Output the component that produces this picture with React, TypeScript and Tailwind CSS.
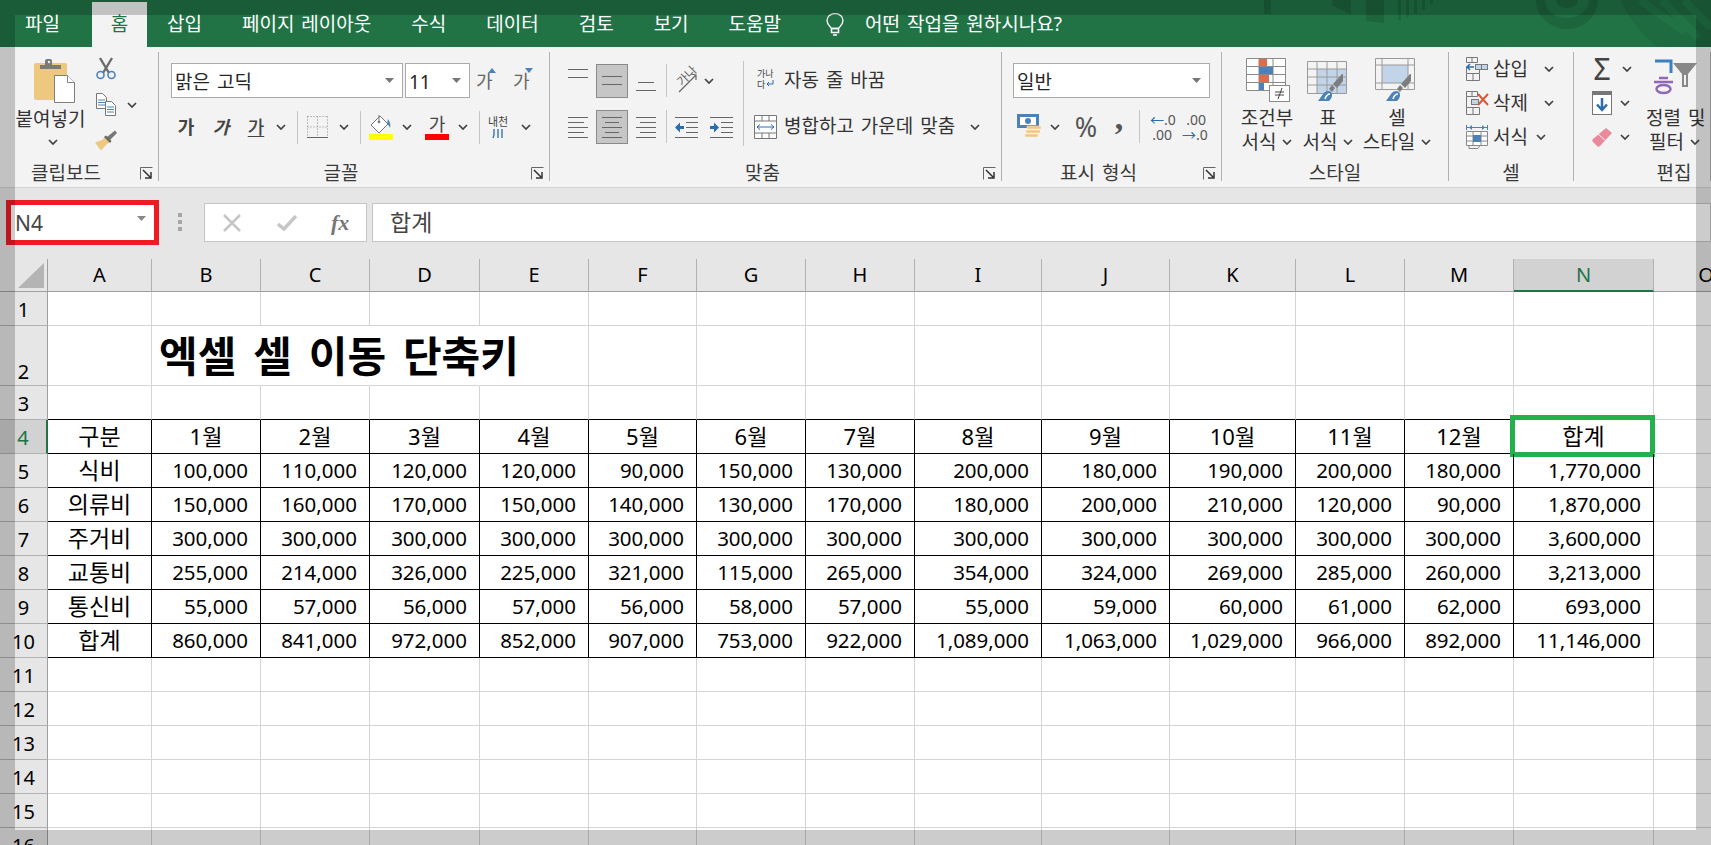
import type { ReactNode } from "react";

const tabs = ["파일", "홈", "삽입", "페이지 레이아웃", "수식", "데이터", "검토", "보기", "도움말"];

const columns = [
  { name: "A", width: "w-[104px]" },
  { name: "B", width: "w-[109px]" },
  { name: "C", width: "w-[109px]" },
  { name: "D", width: "w-[110px]" },
  { name: "E", width: "w-[109px]" },
  { name: "F", width: "w-[108px]" },
  { name: "G", width: "w-[109px]" },
  { name: "H", width: "w-[109px]" },
  { name: "I", width: "w-[127px]" },
  { name: "J", width: "w-[128px]" },
  { name: "K", width: "w-[126px]" },
  { name: "L", width: "w-[109px]" },
  { name: "M", width: "w-[109px]" },
  { name: "N", width: "w-[140px]" },
  { name: "O", width: "w-[104px]" },
];

const tableRows: Record<number, string[]> = {
  4: ["구분", "1월", "2월", "3월", "4월", "5월", "6월", "7월", "8월", "9월", "10월", "11월", "12월", "합계"],
  5: ["식비", "100,000", "110,000", "120,000", "120,000", "90,000", "150,000", "130,000", "200,000", "180,000", "190,000", "200,000", "180,000", "1,770,000"],
  6: ["의류비", "150,000", "160,000", "170,000", "150,000", "140,000", "130,000", "170,000", "180,000", "200,000", "210,000", "120,000", "90,000", "1,870,000"],
  7: ["주거비", "300,000", "300,000", "300,000", "300,000", "300,000", "300,000", "300,000", "300,000", "300,000", "300,000", "300,000", "300,000", "3,600,000"],
  8: ["교통비", "255,000", "214,000", "326,000", "225,000", "321,000", "115,000", "265,000", "354,000", "324,000", "269,000", "285,000", "260,000", "3,213,000"],
  9: ["통신비", "55,000", "57,000", "56,000", "57,000", "56,000", "58,000", "57,000", "55,000", "59,000", "60,000", "61,000", "62,000", "693,000"],
  10: ["합계", "860,000", "841,000", "972,000", "852,000", "907,000", "753,000", "922,000", "1,089,000", "1,063,000", "1,029,000", "966,000", "892,000", "11,146,000"],
};

const rowNumbers = [1, 2, 3, 4, 5, 6, 7, 8, 9, 10, 11, 12, 13, 14, 15, 16];

function Chev({ className = "" }: { className?: string }) {
  return (
    <svg width="10" height="6" viewBox="0 0 10 6" className={`shrink-0 ${className}`}>
      <path d="M1 1l4 4 4-4" fill="none" stroke="#404040" strokeWidth="1.7" />
    </svg>
  );
}

function Launcher() {
  return (
    <svg width="13" height="13" viewBox="0 0 13 13" className="absolute right-[5px] bottom-[1px]">
      <path d="M.5 12.500v-12h12" fill="none" stroke="#666" />
      <path d="M3 3l7 7M11 5v6H5" fill="none" stroke="#333" strokeWidth="1.500" />
    </svg>
  );
}

function Group({ width, label, launcher, labelClass = "", children }: { width: string; label: string; launcher?: boolean; labelClass?: string; children: ReactNode }) {
  return (
    <div className={`${width} h-[129px] mt-[5px] shrink-0 flex flex-col border-r border-[#b1b1b1]`}>
      <div className="h-[103px] shrink-0">{children}</div>
      <div className={`relative h-[26px] text-center text-[19px] leading-[26px] pt-[5px] text-[#3a3a3a] whitespace-nowrap ${launcher ? "pr-[26px]" : ""} ${labelClass}`}>
        {label}
        {launcher && <Launcher />}
      </div>
    </div>
  );
}

function Combo({ width, value, className = "" }: { width: string; value: string; className?: string }) {
  return (
    <div className={`${width} h-[35px] shrink-0 flex items-center justify-between bg-white border border-[#ababab] pl-[3px] pr-[8px] text-[19px] text-[#262626] ${className}`}>
      <span className="mt-[3px]">{value}</span>
      <svg width="9" height="5" viewBox="0 0 9 5"><path d="M0 0h9L4.500 5z" fill="#777" /></svg>
    </div>
  );
}

function Sep({ className = "" }: { className?: string }) {
  return <div className={`w-px h-[33px] bg-[#c6c6c6] shrink-0 ${className}`} />;
}

// 맞춤 아이콘: [x1, x2, y] 선 목록
function Lines({ lines, width = 20, height = 24, color = "#666" }: { lines: number[][]; width?: number; height?: number; color?: string }) {
  return (
    <svg width={width} height={height} viewBox={`0 0 ${width} ${height}`} className="shrink-0">
      {lines.map(([x1, x2, y]) => (
        <path key={`${x1}-${y}`} d={`M${x1} ${y + 0.5}H${x2}`} stroke={color} />
      ))}
    </svg>
  );
}

function Selected({ children }: { children: ReactNode }) {
  return (
    <div className="w-[32px] h-[34px] shrink-0 flex items-center justify-center bg-[#c6c6c6] border border-[#8a8a8a]">
      {children}
    </div>
  );
}

function Orientation() {
  return (
    <div className="relative w-[23px] h-[26px] shrink-0">
      <span className="absolute left-[1px] top-[1px] -rotate-45 text-[12px] leading-[14px] text-[#666] whitespace-nowrap">가나</span>
      <svg width="23" height="26" viewBox="0 0 23 26" className="absolute left-0 top-0">
        <path d="M4 24L21 7M16 6l5 1 0 5" fill="none" stroke="#666" strokeWidth="1.200" />
      </svg>
    </div>
  );
}

function IndentIcon({ flip }: { flip?: boolean }) {
  return (
    <svg width="23" height="24" viewBox="0 0 23 24" className="shrink-0">
      <path d="M0 2.500h23M11 7.500h12M11 12.500h12M11 17.500h12M0 22.500h23" stroke="#666" />
      {flip ? (
        <path d="M0 11h4V7.500l5 5-5 5V14H0z" fill="#2b6cb0" />
      ) : (
        <path d="M9 11H5V7.500l-5 5 5 5V14h4z" fill="#2b6cb0" />
      )}
    </svg>
  );
}

function WrapIcon() {
  return (
    <div className="relative w-[20px] h-[26px] shrink-0 text-[9px] leading-[11px] text-[#444]">
      <div>가나</div>
      <div className="flex items-center">
        다
        <svg width="8" height="8" viewBox="0 0 8 8" className="ml-[1px]"><path d="M7 0v4H1M3 2L1 4l2 2" fill="none" stroke="#2b6cb0" /></svg>
      </div>
    </div>
  );
}

function MergeIcon() {
  return (
    <svg width="23" height="24" viewBox="0 0 23 24" className="shrink-0">
      <path d="M.5.500h22v23H.5zM.5 6h22M.5 18h22M8 .5V6M15 .5V6M8 18v5.500M15 18v5.500" fill="#fff" stroke="#777" />
      <path d="M3 12h17M6 9.500L3 12l3 2.500M17 9.500l3 2.500-3 2.500" fill="none" stroke="#2b6cb0" />
    </svg>
  );
}

function Paste() {
  return (
    <svg width="41" height="45" viewBox="0 0 41 45">
      <rect y="5" width="33" height="37" rx="2" fill="#edc87e" />
      <path d="M6 11V7h5V3a2 2 0 012-2h3a2 2 0 012 2v4h9v4z" fill="#7a7a7a" />
      <circle cx="15" cy="4" r="1.200" fill="#eee" />
      <path d="M20.500 17.500h13l7 7v20h-20z" fill="#fff" stroke="#7f7f7f" />
      <path d="M33.500 17.500v7h7" fill="#fff" stroke="#7f7f7f" />
    </svg>
  );
}

function Scissors() {
  return (
    <svg width="20" height="23" viewBox="0 0 20 23">
      <path d="M4 1l9 15M16 1L7 16" stroke="#6b6b6b" strokeWidth="2.400" fill="none" />
      <circle cx="4.500" cy="18" r="3.500" fill="none" stroke="#4d82b8" strokeWidth="1.600" />
      <circle cx="15.500" cy="18" r="3.500" fill="none" stroke="#4d82b8" strokeWidth="1.600" />
    </svg>
  );
}

function CopyIcon() {
  return (
    <svg width="20" height="23" viewBox="0 0 20 23">
      <path d="M.5.500h6l4 4v11h-10z" fill="#fff" stroke="#777" />
      <path d="M2 7h7M2 9.500h7M2 12h7" stroke="#4d82b8" />
      <path d="M9.500 8.500h6l4 4v10h-10z" fill="#fff" stroke="#777" />
      <path d="M11 14h7M11 16.500h7M11 19h7" stroke="#4d82b8" />
    </svg>
  );
}

function Painter() {
  return (
    <svg width="23" height="21" viewBox="0 0 23 21">
      <path d="M12 7l3 3 7-7-2-2.500z" fill="#777" />
      <path d="M10 7l5 5-3 2-6 6.500L0 12.500l7-2.500z" fill="#edc87e" />
      <path d="M9 7l6 6 1.500-2L11 5.500z" fill="#666" />
    </svg>
  );
}

function FillIcon() {
  return (
    <svg width="24" height="26" viewBox="0 0 24 26">
      <path d="M11 2L2 11l8 8 9-9z" fill="#fff" stroke="#777" />
      <path d="M10 1v7" stroke="#777" />
      <circle cx="10" cy="8" r="1.300" fill="#777" />
      <path d="M19 5c2 3 3 6 2 9-1-3-2-3-3-4z" fill="#4d82b8" />
      <rect y="20" width="24" height="6" fill="#ffff00" />
    </svg>
  );
}

function Borders() {
  return (
    <svg width="21" height="22" viewBox="0 0 21 22">
      <path d="M.5.500h20M.5 11h20M.5.500v21M10.500.500v21M20.500.500v21" stroke="#888" strokeDasharray="1 2" fill="none" />
      <path d="M0 21.500h21" stroke="#666" />
    </svg>
  );
}

function Accounting() {
  return (
    <svg width="24" height="26" viewBox="0 0 24 26" className="shrink-0">
      <rect width="22" height="14" fill="#4d82b8" />
      <rect x="3" y="3" width="16" height="8" fill="#fff" />
      <circle cx="11" cy="7" r="3" fill="#4d82b8" />
      <path d="M10 12h14v3H10zM9 16h14v3H9zM8 20h13v3H8z" fill="#edc87e" stroke="#f3f3f3" strokeWidth=".5" />
    </svg>
  );
}

function Brush({ x, y }: { x: number; y: number }) {
  return (
    <g transform={`translate(${x} ${y})`}>
      <path d="M24 0h1v7l-6 7-4-4z" fill="#7d7d7d" />
      <path d="M11 15l3-4 3 3-3 4z" fill="#7d7d7d" />
      <path d="M0 27l5-7c2-3 6-4 8-2 2 2 1 7-2 9z" fill="#4d82b8" />
      <path d="M7 25c1-3 3-5 5-5" stroke="#fff" strokeWidth="1.500" fill="none" />
    </g>
  );
}

function CondIcon() {
  return (
    <svg width="44" height="45" viewBox="0 0 44 45">
      <path d="M.5.500h39v32H.5zM.5 8.500h39M.5 16.500h39M.5 24.500h39M13 .5v32M27 .5v32" fill="#fff" stroke="#8a8a8a" />
      <rect x="13" y="1" width="8" height="7" fill="#dd6b4d" />
      <rect x="13" y="9" width="14" height="7" fill="#4d82b8" />
      <rect x="13" y="17" width="10" height="7" fill="#dd6b4d" />
      <rect x="13" y="25" width="5" height="7" fill="#4d82b8" />
      <rect x="23.500" y="27.500" width="20" height="16" fill="#fff" stroke="#8a8a8a" />
      <path d="M29 34h9M29 37h9M36 30l-4 11" stroke="#444" fill="none" />
    </svg>
  );
}

function TableStyleIcon() {
  return (
    <svg width="44" height="45" viewBox="0 0 44 45">
      <rect x="10" y="11" width="30" height="24" fill="#c2d5e8" />
      <path d="M.5 3.500h39v32H.5zM.5 11h39M.5 19h39M.5 27h39M10 3.500v32M20 3.500v32M30 3.500v32" fill="none" stroke="#9a9a9a" />
      <Brush x={11} y={16} />
    </svg>
  );
}

function CellStyleIcon() {
  return (
    <svg width="44" height="45" viewBox="0 0 44 45">
      <rect x="7" y="7" width="26" height="18" fill="#c2d5e8" />
      <path d="M.5.500h39v31H.5zM.5 7h39M.5 25h39M7 .5v31M33 .5v31" fill="none" stroke="#9a9a9a" />
      <Brush x={11} y={16} />
    </svg>
  );
}

function InsertIcon() {
  return (
    <svg width="22" height="24" viewBox="0 0 22 24" className="shrink-0">
      <path d="M.5.500h11v5H.5zM6 .5v5M.5 16.500h13v7H.5zM7 16.500v7M.5 9.500v7M13.500 12.500v4" fill="none" stroke="#777" />
      <rect x="9.500" y="7.500" width="12" height="5" fill="#c2d5e8" stroke="#777" />
      <path d="M15.500 7.500v5" stroke="#777" />
      <path d="M1 10h7M4 7l-3 3 3 3" fill="none" stroke="#2b6cb0" strokeWidth="1.500" />
    </svg>
  );
}

function DeleteIcon() {
  return (
    <svg width="24" height="24" viewBox="0 0 24 24" className="shrink-0">
      <path d="M.5.500h11v5H.5zM6 .5v5M.5 16.500h13v7H.5zM7 16.500v7M.5 5.500v11" fill="none" stroke="#777" />
      <rect x="5.500" y="8.500" width="7" height="5" fill="#c2d5e8" stroke="#777" />
      <path d="M12 3l10 11M22 3L12 14" stroke="#d9583b" strokeWidth="2" />
    </svg>
  );
}

function FormatIcon() {
  return (
    <svg width="22" height="26" viewBox="0 0 22 26" className="shrink-0">
      <path d="M1 3.500h20M.5 1v5M21.500 1v5" stroke="#4d82b8" fill="none" />
      <path d="M3 3.500L6 1v5zM19 3.500L16 1v5z" fill="#4d82b8" />
      <path d="M.5 7.500h21v14H.5zM.5 12h21M.5 17h21M7 7.500v14M15 7.500v14" fill="#fff" stroke="#888" />
      <rect x="7" y="11" width="8" height="7" fill="#4d82b8" />
      <path d="M3 21.500v3h9l2-3" fill="none" stroke="#888" />
    </svg>
  );
}

function AutoFill() {
  return (
    <svg width="20" height="24" viewBox="0 0 20 24" className="shrink-0">
      <rect x=".5" y=".5" width="19" height="23" fill="#fff" stroke="#777" />
      <rect width="20" height="4" fill="#777" />
      <path d="M10 7v12M5 13.500l5 5.500 5-5.500" fill="none" stroke="#2b6cb0" strokeWidth="2.500" />
    </svg>
  );
}

function Eraser() {
  return (
    <svg width="21" height="21" viewBox="0 0 21 21" className="shrink-0">
      <path d="M14 1l6 5-12 13c-1 1-2 1-3 0l-4-4c-1-1-1-2 0-3z" fill="#e88a9b" />
      <path d="M6 7l8 7" stroke="#f3f3f3" />
    </svg>
  );
}

function SortIcon() {
  return (
    <div className="flex items-start">
      <svg width="19" height="36" viewBox="0 0 19 36" className="shrink-0 mt-[1px]">
        <path d="M1 2h16v12" fill="none" stroke="#3f7fbf" strokeWidth="3" />
        <path d="M0 23h19M5 19h9" stroke="#9266b8" strokeWidth="2.500" />
        <ellipse cx="9.500" cy="30" rx="7" ry="4" fill="none" stroke="#9266b8" strokeWidth="2.500" />
      </svg>
      <svg width="24" height="24" viewBox="0 0 24 24" className="shrink-0 mt-[5px]">
        <path d="M0 0h24l-9 11v13H9V11z" fill="#888" />
        <path d="M11 12h2v10h-2z" fill="#f3f3f3" />
      </svg>
    </div>
  );
}

function Cell({ row, index, value }: { row: number; index: number; value: string }) {
  const centered = row === 4 || index === 0;
  const isMonth = row === 4 && index > 0 && index < 13;
  const size = isMonth ? "text-[22px]" : centered ? "text-[23px]" : "text-[20.5px]";
  return (
    <div className={`${columns[index].width} relative shrink-0 flex items-center border-r border-b border-black leading-none pb-[1px] ${size} ${centered ? "justify-center" : "justify-end pr-[12px]"}`}>
      {value}
      {row === 4 && index === 13 && (
        <div className="absolute -left-[4px] -top-[5px] w-[145px] h-[42px] border-[5px] border-[#22b14c]" />
      )}
    </div>
  );
}

function SheetRow({ row }: { row: number }) {
  const selected = row === 4;
  const data = tableRows[row];
  const height = row === 2 ? "h-[60px]" : "h-[34px]";
  return (
    <div className={`flex shrink-0 ${height}`}>
      <div className={`w-[48px] shrink-0 flex justify-center border-b border-[#b1b1b1] text-[20px] leading-none ${row === 2 ? "items-end pb-[3px]" : "items-center pt-[2px]"} ${selected ? "bg-[#d2d2d2] text-[#217346] border-r-2 border-r-[#217346]" : "bg-[#e6e6e6] border-r border-r-[#9f9f9f]"}`}>
        {row}
      </div>
      {columns.map((col, i) =>
        data && i < 14 ? (
          <Cell key={col.name} row={row} index={i} value={data[i]} />
        ) : (
          <div
            key={col.name}
            className={`${col.width} shrink-0 relative border-r border-b ${row === 2 && i >= 1 && i <= 3 ? "border-r-transparent" : "border-r-[#d4d4d4]"} ${row === 3 && i < 14 ? "border-b-black" : "border-b-[#d4d4d4]"}`}
          >
            {row === 2 && i === 1 && (
              <div className="absolute z-10 left-[7px] bottom-[3px] text-[42px] leading-[52px] font-bold text-black whitespace-nowrap [word-spacing:6px]">
                엑셀 셀 이동 단축키
              </div>
            )}
          </div>
        )
      )}
    </div>
  );
}

export default function App() {
  return (
    <div className="relative w-[1711px] h-[845px] overflow-hidden flex flex-col bg-white text-black font-['Noto_Sans','Noto_Sans_CJK_KR',sans-serif] [word-spacing:2px]">
      {/* 리본 탭 */}
      <div className="relative h-[47px] shrink-0 bg-[#217346] flex pl-[5px] text-[19px] text-white overflow-hidden">
        <svg width="1711" height="47" viewBox="0 0 1711 47" className="absolute left-0 top-0">
          <g fill="#000" fillOpacity="0.12">
            <rect x="1264" y="0" width="7" height="14" />
            <path d="M1332 0h19v15l-19-10z" />
            <path d="M1366 0h18v23l-18-2z" />
            <path d="M1398 0h3v20h-3zM1406 0h3v17h-3zM1414 0h3v14h-3zM1422 0h3v10h-3zM1430 0h3v4h-3z" />
            <path d="M1536 0a31 29 0 0062 0h-9a22 18 0 01-44 0z" />
            <path d="M1556 0a11 8 0 0022 0z" />
          </g>
          <circle cx="1728" cy="-48" r="118" fill="#000" fillOpacity="0.07" />
          <path d="M1640 0l45 32M1662 0l36 38M1684 0l27 28" stroke="#217346" strokeWidth="8" fill="none" />
        </svg>
        {tabs.map((tab) =>
          tab === "홈" ? (
            <div key={tab} className="relative mt-[2px] ml-[12px] w-[55px] h-[45px] shrink-0 flex items-center justify-center bg-[#f3f3f3] text-[#217346]">
              {tab}
            </div>
          ) : (
            <div key={tab} className="relative mt-[2px] h-[45px] shrink-0 flex items-center px-[20px] whitespace-nowrap">
              {tab}
            </div>
          )
        )}
        <div className="relative mt-[2px] h-[45px] flex items-center ml-[24px] gap-[20px] whitespace-nowrap">
          <svg width="20" height="24" viewBox="0 0 20 24">
            <path d="M6.500 15.500C5 13 2 11.500 2 7.500a8 7 0 0116 0c0 4-3 5.500-4.500 8z" fill="none" stroke="#fff" strokeWidth="1.300" />
            <path d="M6.500 15.500h7v4h-7zM8 22h4" fill="none" stroke="#fff" strokeWidth="1.500" />
          </svg>
          <span>어떤 작업을 원하시나요?</span>
        </div>
      </div>

      {/* 리본 */}
      <div className="h-[141px] shrink-0 flex bg-[#f3f3f3] border-b border-[#d4d4d4] text-[#333] overflow-hidden">
        <Group width="w-[159px]" label="클립보드" launcher>
          <div className="flex h-full">
            <div className="w-[90px] pt-[6px] flex flex-col items-center">
              <div className="ml-[19px]">
                <Paste />
              </div>
              <div className="mt-[3px] ml-[11px] text-[19px] leading-[26px] whitespace-nowrap">붙여넣기</div>
              <Chev className="mt-[7px] ml-[16px]" />
            </div>
            <div className="flex flex-col pt-[5px] pl-[6px]">
              <Scissors />
              <div className="mt-[13px] flex items-center gap-[11px]">
                <CopyIcon />
                <Chev />
              </div>
              <div className="mt-[14px] -ml-[1px]">
                <Painter />
              </div>
            </div>
          </div>
        </Group>

        <Group width="w-[391px]" label="글꼴" launcher>
          <div className="flex items-center mt-[11px] ml-[12px]">
            <Combo width="w-[232px]" value="맑은 고딕" />
            <Combo width="w-[65px]" value="11" className="ml-[2px]" />
            <div className="relative ml-[6px] w-[20px] text-[18px] leading-[24px] text-[#666]">
              가
              <svg width="8" height="5" viewBox="0 0 8 5" className="absolute right-0 -top-[1px]"><path d="M0 5h8L4 0z" fill="#4d82b8" /></svg>
            </div>
            <div className="relative ml-[17px] w-[20px] text-[18px] leading-[24px] text-[#666]">
              가
              <svg width="8" height="5" viewBox="0 0 8 5" className="absolute right-0 -top-[1px]"><path d="M0 0h8L4 5z" fill="#4d82b8" /></svg>
            </div>
          </div>
          <div className="flex items-center h-[32px] mt-[13px] ml-[12px] text-[18px] text-[#444]">
            <span className="ml-[5px] w-[20px] text-center font-bold">가</span>
            <span className="ml-[15px] w-[20px] text-center font-bold italic">가</span>
            <span className="ml-[15px] w-[20px] text-center font-medium underline underline-offset-2">가</span>
            <Chev className="ml-[10px]" />
            <Sep className="ml-[11px]" />
            <div className="ml-[9px] flex"><Borders /></div>
            <Chev className="ml-[11px]" />
            <Sep className="ml-[11px]" />
            <div className="ml-[8px] flex"><FillIcon /></div>
            <Chev className="ml-[9px]" />
            <div className="ml-[13px] w-[24px] flex flex-col items-center">
              <span className="leading-[20px]">가</span>
              <div className="w-[24px] h-[6px] bg-[#ff0000]" />
            </div>
            <Chev className="ml-[9px]" />
            <Sep className="ml-[11px]" />
            <div className="ml-[9px] w-[18px] flex flex-col items-center text-[11px] leading-[12px]">
              <span className="whitespace-nowrap">내천</span>
              <svg width="12" height="11" viewBox="0 0 12 11"><path d="M2 1v6l-1 3M6 1v9M10 1v9" fill="none" stroke="#2b6cb0" strokeWidth="1.300" /></svg>
            </div>
            <Chev className="ml-[14px]" />
          </div>
        </Group>

        <Group width="w-[452px]" label="맞춤" launcher>
          <div className="flex h-full">
            <div className="w-[193px] shrink-0 pl-[18px] pt-[11px]">
              <div className="flex items-center h-[35px]">
                <Lines lines={[[0, 20, 0], [0, 20, 8]]} />
                <div className="ml-[8px]"><Selected><Lines lines={[[0, 20, 7], [0, 20, 15]]} /></Selected></div>
                <div className="ml-[8px]"><Lines lines={[[2, 18, 13], [0, 20, 21]]} /></div>
                <Sep className="ml-[10px]" />
                <div className="ml-[8px]"><Orientation /></div>
                <Chev className="ml-[6px]" />
              </div>
              <div className="flex items-center h-[35px] mt-[11px]">
                <Lines lines={[[0, 20, 2], [0, 16, 7], [0, 20, 12], [0, 16, 17], [0, 20, 22]]} />
                <div className="ml-[8px]"><Selected><Lines lines={[[0, 20, 2], [3, 17, 7], [0, 20, 12], [3, 17, 17], [0, 20, 22]]} /></Selected></div>
                <div className="ml-[8px]"><Lines lines={[[0, 20, 2], [4, 20, 7], [0, 20, 12], [4, 20, 17], [0, 20, 22]]} /></div>
                <Sep className="ml-[10px]" />
                <div className="ml-[8px]"><IndentIcon /></div>
                <div className="ml-[12px]"><IndentIcon flip /></div>
              </div>
            </div>
            <div className="w-px h-[85px] mt-[9px] bg-[#c6c6c6] shrink-0" />
            <div className="pt-[11px] text-[19px] whitespace-nowrap">
              <div className="flex items-center h-[35px] ml-[13px]">
                <WrapIcon />
                <span className="ml-[7px]">자동 줄 바꿈</span>
              </div>
              <div className="flex items-center h-[35px] mt-[11px] ml-[10px]">
                <MergeIcon />
                <span className="ml-[7px]">병합하고 가운데 맞춤</span>
                <Chev className="ml-[15px]" />
              </div>
            </div>
          </div>
        </Group>

        <Group width="w-[220px]" label="표시 형식" launcher>
          <div className="mt-[11px] ml-[11px]">
            <Combo width="w-[197px]" value="일반" />
          </div>
          <div className="flex items-center h-[35px] mt-[11px] ml-[15px] text-[#555]">
            <Accounting />
            <Chev className="ml-[9px]" />
            <span className="ml-[13px] w-[26px] text-center text-[27px] leading-none">%</span>
            <span className="ml-[15px] -mt-[16px] w-[10px] h-[22px] text-center font-['Liberation_Serif',serif] text-[34px] font-bold leading-[20px]">,</span>
            <Sep className="ml-[15px]" />
            <div className="ml-[10px] w-[22px] text-[14px] leading-[15px] text-right whitespace-nowrap">
              <div><span className="text-[#2b6cb0]">←</span>.0</div>
              <div>.00</div>
            </div>
            <div className="ml-[10px] w-[24px] text-[14px] leading-[15px] text-right whitespace-nowrap">
              <div>.00</div>
              <div><span className="text-[#2b6cb0]">→</span>.0</div>
            </div>
          </div>
        </Group>

        <Group width="w-[227px]" label="스타일">
          <div className="flex pt-[6px] pl-[14px] text-[19px] leading-[24px] whitespace-nowrap">
            <div className="w-[62px] flex flex-col items-center">
              <div className="h-[45px] ml-[1px]"><CondIcon /></div>
              <div className="mt-[3px]">조건부</div>
              <div className="flex items-center">서식<Chev className="ml-[6px]" /></div>
            </div>
            <div className="w-[60px] flex flex-col items-center">
              <div className="h-[45px] ml-[1px]"><TableStyleIcon /></div>
              <div className="mt-[3px]">표</div>
              <div className="flex items-center">서식<Chev className="ml-[6px]" /></div>
            </div>
            <div className="w-[78px] flex flex-col items-center">
              <div className="h-[45px]"><CellStyleIcon /></div>
              <div className="mt-[3px]">셀</div>
              <div className="flex items-center">스타일<Chev className="ml-[6px]" /></div>
            </div>
          </div>
        </Group>

        <Group width="w-[125px]" label="셀">
          <div className="pl-[17px] text-[19px] whitespace-nowrap">
            <div className="flex items-center h-[34px]">
              <InsertIcon />
              <span className="ml-[5px]">삽입</span>
              <Chev className="ml-[16px]" />
            </div>
            <div className="flex items-center h-[34px]">
              <DeleteIcon />
              <span className="ml-[3px]">삭제</span>
              <Chev className="ml-[16px]" />
            </div>
            <div className="flex items-center h-[34px]">
              <FormatIcon />
              <span className="ml-[5px]">서식</span>
              <Chev className="ml-[8px]" />
            </div>
          </div>
        </Group>

        <Group width="w-[137px]" label="편집" labelClass="pl-[64px]">
          <div className="flex pl-[18px] text-[19px] leading-[24px] whitespace-nowrap">
            <div className="w-[62px] shrink-0">
              <div className="flex items-center h-[34px]">
                <span className="w-[20px] text-center text-[30px] leading-none text-[#444]">Σ</span>
                <Chev className="ml-[10px]" />
              </div>
              <div className="flex items-center h-[34px]">
                <AutoFill />
                <Chev className="ml-[8px]" />
              </div>
              <div className="flex items-center h-[34px]">
                <Eraser />
                <Chev className="ml-[7px]" />
              </div>
            </div>
            <div className="w-[60px] shrink-0 pt-[6px] flex flex-col items-start">
              <div className="h-[45px]"><SortIcon /></div>
              <div className="mt-[3px] -ml-[8px]">정렬 및</div>
              <div className="flex items-center -ml-[5px]">필터<Chev className="ml-[6px]" /></div>
            </div>
          </div>
        </Group>
      </div>

      {/* 수식 입력줄 */}
      <div className="h-[70px] shrink-0 flex items-start bg-[#e6e6e6]">
        <div className="ml-[6px] mt-[12px] w-[153px] h-[45px] shrink-0 flex items-center justify-between bg-white border-[5px] border-[#ed1c24] pl-[4px] pr-[8px] text-[21px] text-[#444]">
          <span className="mt-[3px]">N4</span>
          <svg width="9" height="5" viewBox="0 0 9 5" className="mb-[8px]"><path d="M0 0h9L4.500 5z" fill="#888" /></svg>
        </div>
        <div className="ml-[19px] mt-[25px] w-[4px] flex flex-col gap-[3px]">
          <div className="h-[4px] bg-[#a6a6a6]" />
          <div className="h-[4px] bg-[#a6a6a6]" />
          <div className="h-[4px] bg-[#a6a6a6]" />
        </div>
        <div className="ml-[22px] mt-[15px] w-[163px] h-[39px] shrink-0 flex items-center bg-white border border-[#c6c6c6]">
          <svg width="18" height="18" viewBox="0 0 18 18" className="ml-[18px]"><path d="M1 1l16 16M17 1L1 17" stroke="#c6c6c6" strokeWidth="2.500" /></svg>
          <svg width="20" height="16" viewBox="0 0 20 16" className="ml-[36px]"><path d="M1 9l6 5L19 1" fill="none" stroke="#c6c6c6" strokeWidth="3.500" /></svg>
          <span className="ml-[34px] font-['Liberation_Serif',serif] italic font-bold text-[22px] text-[#777]">fx</span>
        </div>
        <div className="ml-[5px] mt-[15px] flex-1 h-[39px] flex items-center bg-white border border-[#c6c6c6] pl-[17px] text-[23px] text-[#444]">
          합계
        </div>
      </div>

      {/* 시트 */}
      <div className="flex flex-col flex-1 min-h-0">
        <div className="flex h-[34px] shrink-0 bg-[#e6e6e6] border-t border-t-[#e6e6e6]">
          <div className="relative w-[48px] shrink-0 border-r border-b border-[#9f9f9f]">
            <svg width="26" height="25" viewBox="0 0 26 25" className="absolute right-[3px] bottom-[3px]"><path d="M26 0v25H0z" fill="#b4b4b4" /></svg>
          </div>
          {columns.map((col) => (
            <div
              key={col.name}
              className={`${col.width} shrink-0 flex items-center justify-center text-[20px] leading-none border-b ${
                col.name === "N"
                  ? "bg-[#d2d2d2] text-[#217346] border-b-2 border-b-[#217346] border-r border-r-[#b1b1b1]"
                  : col.name === "O"
                  ? "border-b-[#9f9f9f]"
                  : "border-b-[#9f9f9f] border-r border-r-[#b1b1b1]"
              }`}
            >
              {col.name}
            </div>
          ))}
        </div>
        {rowNumbers.map((row) => (
          <SheetRow key={row} row={row} />
        ))}
      </div>

      {/* 가장자리 어두운 테두리 */}
      <div className="absolute inset-0 border-[15px] border-black/20 pointer-events-none" />
    </div>
  );
}
